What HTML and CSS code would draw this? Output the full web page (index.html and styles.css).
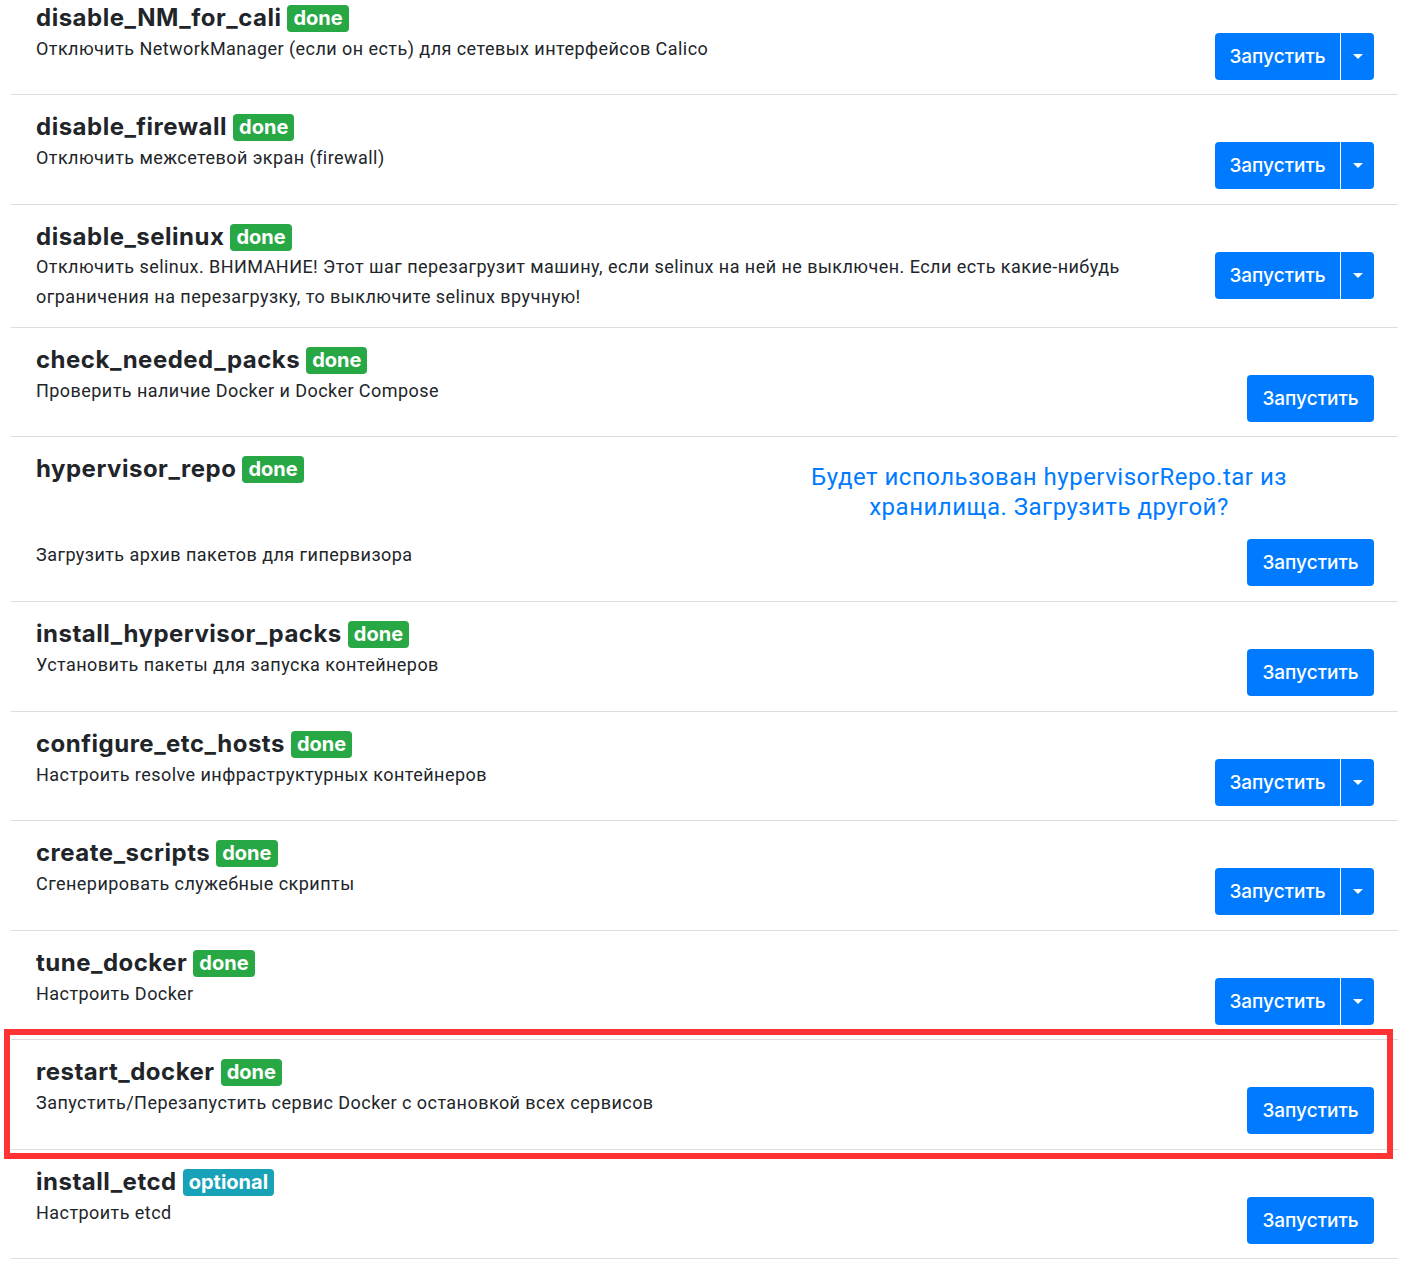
FILE: index.html
```html
<!DOCTYPE html>
<html lang="ru">
<head>
<meta charset="utf-8">
<title>Steps</title>
<link rel="stylesheet" href="styles.css">
</head>
<body>
<div class="steps">
  <div class="step">
    <div class="info">
      <h4 class="title">disable_NM_for_cali <span class="badge done">done</span></h4>
      <p class="desc">Отключить NetworkManager (если он есть) для сетевых интерфейсов Calico</p>
    </div>
    <div class="actions">
      <div class="btn-group">
        <button class="btn">Запустить</button>
        <button class="btn caret-btn"><span class="caret"></span></button>
      </div>
    </div>
  </div>

  <div class="step">
    <div class="info">
      <h4 class="title">disable_firewall <span class="badge done">done</span></h4>
      <p class="desc">Отключить межсетевой экран (firewall)</p>
    </div>
    <div class="actions">
      <div class="btn-group">
        <button class="btn">Запустить</button>
        <button class="btn caret-btn"><span class="caret"></span></button>
      </div>
    </div>
  </div>

  <div class="step step-tight">
    <div class="info">
      <h4 class="title">disable_selinux <span class="badge done">done</span></h4>
      <p class="desc">Отключить selinux. ВНИМАНИЕ! Этот шаг перезагрузит машину, если selinux на ней не выключен. Если есть какие-нибудь ограничения на перезагрузку, то выключите selinux вручную!</p>
    </div>
    <div class="actions">
      <div class="btn-group">
        <button class="btn">Запустить</button>
        <button class="btn caret-btn"><span class="caret"></span></button>
      </div>
    </div>
  </div>

  <div class="step">
    <div class="info">
      <h4 class="title">check_needed_packs <span class="badge done">done</span></h4>
      <p class="desc">Проверить наличие Docker и Docker Compose</p>
    </div>
    <div class="actions">
      <button class="btn btn-single">Запустить</button>
    </div>
  </div>

  <div class="step step-tall">
    <div class="info">
      <h4 class="title">hypervisor_repo <span class="badge done">done</span></h4>
      <p class="desc">Загрузить архив пакетов для гипервизора</p>
    </div>
    <div class="actions actions-wide">
      <p class="upload-note">Будет использован hypervisorRepo.tar из хранилища. Загрузить другой?</p>
      <button class="btn btn-single">Запустить</button>
    </div>
  </div>

  <div class="step">
    <div class="info">
      <h4 class="title">install_hypervisor_packs <span class="badge done">done</span></h4>
      <p class="desc">Установить пакеты для запуска контейнеров</p>
    </div>
    <div class="actions">
      <button class="btn btn-single">Запустить</button>
    </div>
  </div>

  <div class="step">
    <div class="info">
      <h4 class="title">configure_etc_hosts <span class="badge done">done</span></h4>
      <p class="desc">Настроить resolve инфраструктурных контейнеров</p>
    </div>
    <div class="actions">
      <div class="btn-group">
        <button class="btn">Запустить</button>
        <button class="btn caret-btn"><span class="caret"></span></button>
      </div>
    </div>
  </div>

  <div class="step">
    <div class="info">
      <h4 class="title">create_scripts <span class="badge done">done</span></h4>
      <p class="desc">Сгенерировать служебные скрипты</p>
    </div>
    <div class="actions">
      <div class="btn-group">
        <button class="btn">Запустить</button>
        <button class="btn caret-btn"><span class="caret"></span></button>
      </div>
    </div>
  </div>

  <div class="step">
    <div class="info">
      <h4 class="title">tune_docker <span class="badge done">done</span></h4>
      <p class="desc">Настроить Docker</p>
    </div>
    <div class="actions">
      <div class="btn-group">
        <button class="btn">Запустить</button>
        <button class="btn caret-btn"><span class="caret"></span></button>
      </div>
    </div>
  </div>

  <div class="step">
    <div class="info">
      <h4 class="title">restart_docker <span class="badge done">done</span></h4>
      <p class="desc">Запустить/Перезапустить сервис Docker с остановкой всех сервисов</p>
    </div>
    <div class="actions">
      <button class="btn btn-single">Запустить</button>
    </div>
  </div>

  <div class="step">
    <div class="info">
      <h4 class="title">install_etcd <span class="badge optional">optional</span></h4>
      <p class="desc">Настроить etcd</p>
    </div>
    <div class="actions">
      <button class="btn btn-single">Запустить</button>
    </div>
  </div>
</div>
<div class="highlight"></div>
</body>
</html>
```
FILE: styles.css
```css
html, body {
  margin: 0;
  padding: 0;
  background: #ffffff;
}

body {
  font-family: Roboto, "Liberation Sans", Arial, sans-serif;
  color: #212529;
  position: relative;
  overflow: hidden;
  height: 1266px;
}

.steps {
  margin: -14.5px 0 0 11px;
  width: 1387px;
}

.step {
  display: flex;
  border-bottom: 1px solid #dedede;
  padding: 16px 24px 14.5px 25px;
}

.step-tight,
.step-tall {
  padding-bottom: 15px;
}

.info {
  flex: 1;
  display: flex;
  flex-direction: column;
  justify-content: space-between;
  min-width: 0;
}

.title {
  margin: 0;
  font-family: Inter, Roboto, sans-serif;
  font-size: 24px;
  line-height: 31px;
  font-weight: 700;
  letter-spacing: 0.5px;
  color: #212529;
  display: flex;
  align-items: center;
  gap: 6px;
}

.badge {
  display: inline-block;
  font-family: Inter, Roboto, sans-serif;
  font-size: 20px;
  line-height: 27px;
  font-weight: 700;
  color: #ffffff;
  padding: 0 6px;
  margin-top: 2px;
  border-radius: 4px;
  letter-spacing: 0;
}

.badge.done {
  background: #28a745;
}

.badge.optional {
  background: #17a2b8;
}

.desc {
  margin: 0 0 16px;
  font-size: 18px;
  line-height: 30px;
  letter-spacing: 0.45px;
  color: #212529;
  max-width: 1090px;
}

.step-tight .desc {
  margin-bottom: 0;
}

.actions {
  display: flex;
  flex-direction: column;
  align-items: flex-end;
  justify-content: flex-start;
  padding-top: 31px;
  flex-shrink: 0;
}

.actions-wide {
  width: 650px;
  padding-top: 9px;
}

.upload-note {
  margin: 0 0 17px;
  padding: 0 70px;
  align-self: stretch;
  text-align: center;
  font-size: 24px;
  line-height: 30px;
  letter-spacing: 0.5px;
  color: #007bff;
}

.btn {
  font-family: Inter, Roboto, sans-serif;
  font-size: 19px;
  font-weight: 500;
  color: #ffffff;
  background: #007bff;
  border: none;
  height: 47px;
  padding: 0 14px;
  border-radius: 4px;
  cursor: pointer;
}

.btn-single {
  width: 127px;
}

.btn-group {
  display: flex;
}

.btn-group .btn:first-child {
  width: 126px;
  border-radius: 4px 0 0 4px;
  border-right: 1px solid #ffffff;
}

.caret-btn {
  width: 33px;
  padding: 0;
  border-radius: 0 4px 4px 0;
  display: flex;
  align-items: center;
  justify-content: center;
}

.caret {
  width: 0;
  height: 0;
  border-left: 5px solid transparent;
  border-right: 5px solid transparent;
  border-top: 5px solid #ffffff;
}

.highlight {
  position: absolute;
  left: 4px;
  top: 1029px;
  width: 1377px;
  height: 118px;
  border: 6px solid #ff3333;
  pointer-events: none;
}
```
